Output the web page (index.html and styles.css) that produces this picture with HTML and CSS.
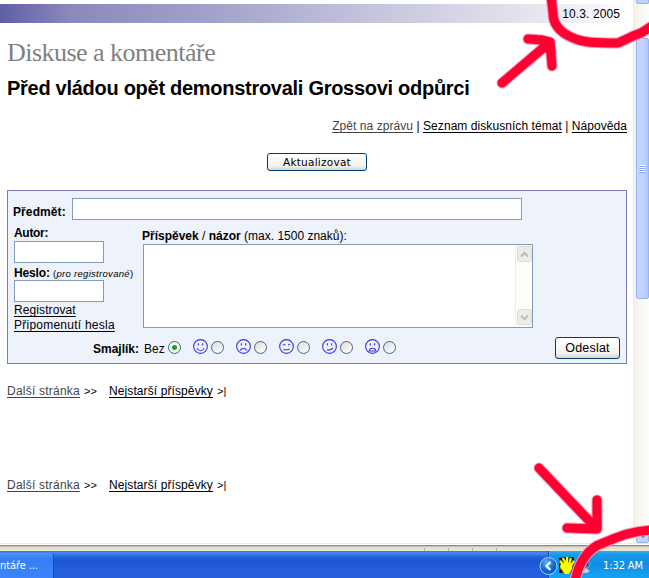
FILE: index.html
```html
<!DOCTYPE html>
<html lang="cs">
<head>
<meta charset="utf-8">
<title>Diskuse a komentáře</title>
<link rel="stylesheet" href="styles.css">
</head>
<body>
<div class="screen">
  <div class="browser">
    <main class="page">
      <div class="banner"><span class="date">10.3. 2005</span></div>
      <div class="section-title">Diskuse a komentáře</div>
      <h1><span>Před vládou opět demonstrovali Grossovi odpůrci</span></h1>
      <nav class="top-links"><a class="visited" href="#">Zpět na zprávu</a> | <a href="#">Seznam diskusních témat</a> | <a href="#">Nápověda</a></nav>
      <div class="refresh-row"><button class="refresh" type="button">Aktualizovat</button></div>
      <form class="post-form">
        <div class="subject-row"><label class="bold" for="subject">Předmět:</label><input id="subject" class="field subject" type="text"></div>
        <div class="columns">
          <div class="account">
            <label class="bold author-label" for="author">Autor:</label>
            <input id="author" class="field" type="text">
            <label class="password-label" for="password"><b>Heslo:</b> <small>(<i>pro registrované</i>)</small></label>
            <input id="password" class="field" type="password">
            <a class="register" href="#">Registrovat</a>
            <a class="reminder" href="#">Připomenutí hesla</a>
          </div>
          <div class="message">
            <label class="message-label"><b>Příspěvek</b> / <b>názor</b> (max. 1500 znaků):</label>
            <div class="textarea">
              <div class="text-scroll">
                <svg width="15" height="17" viewBox="0 0 15 17"><rect x=".5" y=".5" width="14" height="15" rx="2" fill="#eeede5" stroke="#dedcd0"/><path d="M4 10.5 7.5 7l3.5 3.5" fill="none" stroke="#bfbfb8" stroke-width="2.3"/></svg>
                <svg width="15" height="17" viewBox="0 0 15 17"><rect x=".5" y=".5" width="14" height="15" rx="2" fill="#eeede5" stroke="#dedcd0"/><path d="M4 6.5 7.5 10 11 6.5" fill="none" stroke="#bfbfb8" stroke-width="2.3"/></svg>
              </div>
            </div>
          </div>
        </div>
        <div class="smile-row">
          <b class="smile-label">Smajlík:</b><span class="none-label">Bez</span><i class="radio checked"></i>
          <svg class="smile" viewBox="0 0 14 14"><circle cx="7" cy="7" r="6.4"/><path d="M5 4v2M9 4v2M3.5 8.5C5 11.8 9 11.8 10.5 8.5"/></svg><i class="radio"></i>
          <svg class="smile" viewBox="0 0 14 14"><circle cx="7" cy="7" r="6.4"/><path d="M5 4v2M9 4v2M3.8 10.8C5 8.2 9 8.2 10.2 10.8"/></svg><i class="radio"></i>
          <svg class="smile" viewBox="0 0 14 14"><circle cx="7" cy="7" r="6.4"/><path d="M3.5 5.3H6M8.5 5.3h2M4 10h4l2-.5"/></svg><i class="radio"></i>
          <svg class="smile" viewBox="0 0 14 14"><circle cx="7" cy="7" r="6.4"/><path d="M5 4v2M9 4v2M4.5 10.3c3 .3 4.5-.3 5.7-2"/></svg><i class="radio"></i>
          <svg class="smile" viewBox="0 0 14 14"><circle cx="7" cy="7" r="6.4"/><path d="M5 4v2M9 4v2M4 11.2c0-3.5 6-3.5 6 0z"/></svg><i class="radio"></i>
          <button class="send" type="button">Odeslat</button>
        </div>
      </form>
      <div class="pager"><a class="visited" href="#">Další stránka</a><span class="next">&gt;&gt;</span><a class="oldest" href="#">Nejstarší příspěvky</a><span class="last">&gt;|</span></div>
      <div class="pager second"><a class="visited" href="#">Další stránka</a><span class="next">&gt;&gt;</span><a class="oldest" href="#">Nejstarší příspěvky</a><span class="last">&gt;|</span></div>
    </main>
    <aside class="scrollbar">
      <div class="scroll-up"></div>
      <div class="thumb"><div class="grip"></div></div>
      <div class="scroll-down"><svg width="12" height="14" viewBox="0 0 12 14"><path d="M2.5 5 6 8.5 9.5 5" fill="none" stroke="#4d6185" stroke-width="2"/></svg></div>
    </aside>
  </div>
  <div class="status"><i></i><i></i><i></i><i></i></div>
  <footer class="taskbar">
    <div class="task">ntáře ...</div>
    <div class="tray">
      <svg class="tray-icons" width="57" height="27" viewBox="0 0 57 27">
        <defs><radialGradient id="orb" cx=".4" cy=".3"><stop offset="0" stop-color="#5bb4f5"/><stop offset="1" stop-color="#0b5fd0"/></radialGradient></defs>
        <path d="M20 6h15v16H20z" fill="#4c5a24"/>
        <path d="M20 7h3v2h-3zM25 6h3v3h-3zM31 6h4v3h-4zM20 13h3v4h-3zM20 19h3v3h-3z" fill="#101820"/>
        <path d="M21 10l3 3M24 7l3 6M28 6v7M32 7l-2 6M35 10l-3 5" stroke="#ff0" stroke-width="2"/>
        <path d="M22 12h11v6l-3 5h-4l-5-7z" fill="#ff0"/>
        <path d="M40 7h10v9H40z" fill="#34457f" stroke="#8798c8"/><path d="M40 20l7-3 4 3-3 2h-7z" fill="#c5cce1"/>
        <circle cx="9.5" cy="15" r="8.5" fill="url(#orb)" stroke="#a8d2f6"/>
        <path d="M11.5 11 7.5 15l4 4" fill="none" stroke="#fff" stroke-width="2.2"/>
      </svg>
      <span class="clock">1:32 AM</span>
    </div>
  </footer>
  <svg class="marks" viewBox="0 0 649 578">
    <g class="halo">
      <path d="M502 83 549 43M528 39 542 40 550 42 552 66M551 -4 553 13C553 24 560 32 571 37 583 43 596 43 618 43L633 36 641 33 652 26"/>
      <path d="M539 468 596 528M597 500V529L567 528M575 582C578 564 586 552 598 545 612 540 627 531 652 530"/>
    </g>
    <g class="ink">
      <path d="M502 83 549 43M528 39 542 40 550 42 552 66M551 -4 553 13C553 24 560 32 571 37 583 43 596 43 618 43L633 36 641 33 652 26"/>
      <path d="M539 468 596 528M597 500V529L567 528M575 582C578 564 586 552 598 545 612 540 627 531 652 530"/>
      <path class="solid" d="M542 40 550 42 551 52zM589 528 597 528V520z"/>
    </g>
  </svg>
</div>
</body>
</html>
```

FILE: styles.css
```css
* { box-sizing: border-box; }
body { margin: 0; background: #fff; color: #000; font: 12px/14px "Liberation Sans", Arial, sans-serif; overflow: hidden; }
.screen { position: relative; width: 649px; height: 578px; display: flex; flex-direction: column; }
.browser { display: flex; height: 543px; }
.page { width: 633px; padding: 4px 6px 0 7px; white-space: nowrap; }
a { color: #000; text-decoration: underline; text-underline-offset: 2px; text-decoration-skip-ink: none; }
a.visited { color: #444; }
.banner { height: 19px; margin: 0 4px 0 -7px; padding: 3px 3px 0 0; text-align: right; background: linear-gradient(90deg, #605fa5 0, #7876b2 40px, #8b89bb 70px, #a4a3cb 220px, #c4c4dd 370px, #dedeea 500px, #f3f3f8 590px, #fff 630px); }
.date { letter-spacing: .1px; }
.section-title { margin-top: 14px; height: 32px; font: 26px/32px "Liberation Serif", "Times New Roman", serif; color: #808080; letter-spacing: -.52px; }
h1 { margin: 7px 0 0; height: 24px; font-size: 20px; line-height: 24px; letter-spacing: -.28px; }
.top-links { margin-top: 19px; height: 14px; text-align: right; letter-spacing: .06px; }
.refresh-row { margin-top: 20px; display: flex; justify-content: center; }
.refresh, .send { padding: 0; border: 1px solid #003c74; border-radius: 3px; background: linear-gradient(#fff, #f3f2ec 75%, #d8d4c8); color: #000; }
.refresh { width: 100px; height: 18px; font: 10.5px/14px "DejaVu Sans", Verdana, sans-serif; letter-spacing: .25px; }
.post-form { margin: 19px 0 0; width: 620px; height: 174px; padding: 7px 6px 0 5px; border: 1px solid #7c7cae; background: #eef2fb; display: flex; flex-direction: column; }
.field { display: block; width: 90px; height: 22px; margin: 0; padding: 2px; border: 1px solid #7f9db9; background: #fff; }
.subject-row { display: flex; height: 22px; }
.subject-row .bold { width: 59px; padding-top: 7px; letter-spacing: .1px; }
.subject { width: 450px; }
.bold { font-weight: bold; }
.columns { display: flex; height: 113px; padding-left: 1px; }
.account { width: 129px; padding-top: 6px; display: flex; flex-direction: column; }
.author-label { height: 15px; letter-spacing: -.3px; }
.password-label { height: 17px; padding-top: 3px; letter-spacing: -.15px; }
.password-label small { font-size: 9.5px; letter-spacing: .3px; }
.register { margin-top: 1px; line-height: 15px; letter-spacing: .1px; }
.reminder { line-height: 15px; letter-spacing: .24px; }
.account .field { flex: none; }
.message { padding-top: 9px; display: flex; flex-direction: column; }
.message-label { height: 15px; margin-left: -1px; }
.textarea { width: 390px; height: 84px; border: 1px solid #7f9db9; background: #fff; display: flex; justify-content: flex-end; }
.text-scroll { width: 17px; padding: 1px; border-left: 1px solid #eee; background: #fdfdf9; display: flex; flex-direction: column; justify-content: space-between; }
.smile-row { display: flex; height: 30px; align-items: center; }
.smile-label { width: 126px; text-align: right; margin-top: 2px; }
.none-label { width: 24px; margin: 1px 0 0 5px; }
.radio { width: 13px; height: 13px; flex: none; margin-top: -1px; border: 1px solid #3d6789; border-radius: 50%; background: linear-gradient(135deg, #dcdcd7, #fff); }
.checked { background: radial-gradient(circle, #21a121 0 2px, #f6f6f4 3px); }
.smile { width: 15px; height: 15px; flex: none; margin: -4px 3px 0 12px; fill: none; stroke: #3530e0; stroke-width: 1; }
.send { width: 65px; height: 22px; margin-left: auto; font: 12.5px/18px "Liberation Sans", Arial, sans-serif; letter-spacing: .2px; }
.pager { display: flex; margin-top: 20px; height: 14px; }
.pager .visited { width: 73px; letter-spacing: .22px; }
.pager .oldest { width: 104px; letter-spacing: .1px; }
.pager .next { width: 25px; margin-left: 4px; }
.pager .last { margin-left: 4px; }
.second { margin-top: 80px; }
.next, .last { font-size: 11px; }
.scrollbar { width: 16px; padding-left: 2px; border-left: 1px solid #eeede5; background: linear-gradient(90deg, #f3f1ec, #fefefb); display: flex; flex-direction: column; }
.scroll-up { height: 4px; border: 1px solid #98b4e7; border-top: 0; border-radius: 0 0 2px 2px; background: #bdd2fc; }
.thumb { margin-top: 34px; height: 261px; border: 1px solid #98b4ee; border-radius: 2px; background: linear-gradient(90deg, #c9d7fe, #bdd0fb 65%, #aac7fa); display: flex; align-items: center; justify-content: center; }
.grip { width: 7px; height: 8px; background: repeating-linear-gradient(#eef5ff 0 1px, #8cb0f8 1px 2px); }
.scroll-down { margin-top: auto; height: 16px; background: #bfd2fc; border: 1px solid #98b4e7; border-radius: 2px; }
.status { height: 8px; padding: 4px 0 0 424px; display: flex; gap: 23px; border-top: 1px solid #eceae5; background: linear-gradient(#fff 0 1px, #8e8b83 1px 2px, #c5c2b4 2px 3px, #dfdccd 3px, #ece9d8); }
.status i { width: 1px; background: #b5b2a2; }
.taskbar { height: 27px; display: flex; justify-content: space-between; background: linear-gradient(#3075df, #3f8cf3 2px, #2462dc 6px, #1e53d1 10px, #2360df 20px, #245edb); color: #fff; font: 11px/14px "DejaVu Sans Condensed", Tahoma, sans-serif; }
.task { width: 54px; height: 25px; padding: 6px 0 0; margin-top: 2px; border-right: 1px solid #1a4bb4; border-radius: 0 3px 0 0; background: linear-gradient(#5294f7, #377df4 5px, #3b84fa); white-space: nowrap; letter-spacing: -.1px; }
.tray { width: 101px; display: flex; border-left: 1px solid #164aa8; background: linear-gradient(90deg, #18b9ef 1px, transparent 1px), linear-gradient(#30aaf0, #139ae9 4px, #108ce4 13px, #15a2f1 25px); }
.tray-icons { flex: none; width: 57px; margin-left: -10px; }
.clock { padding: 8px 0 0 7px; white-space: nowrap; letter-spacing: -.1px; }
.marks { position: absolute; inset: 0; width: 649px; height: 578px; fill: none; stroke-linecap: round; stroke-linejoin: round; pointer-events: none; }
.halo { stroke: #f7a0b5; stroke-width: 11; }
.ink { stroke: #ff0033; stroke-width: 9; }
.solid { fill: #ff0033; }
```
